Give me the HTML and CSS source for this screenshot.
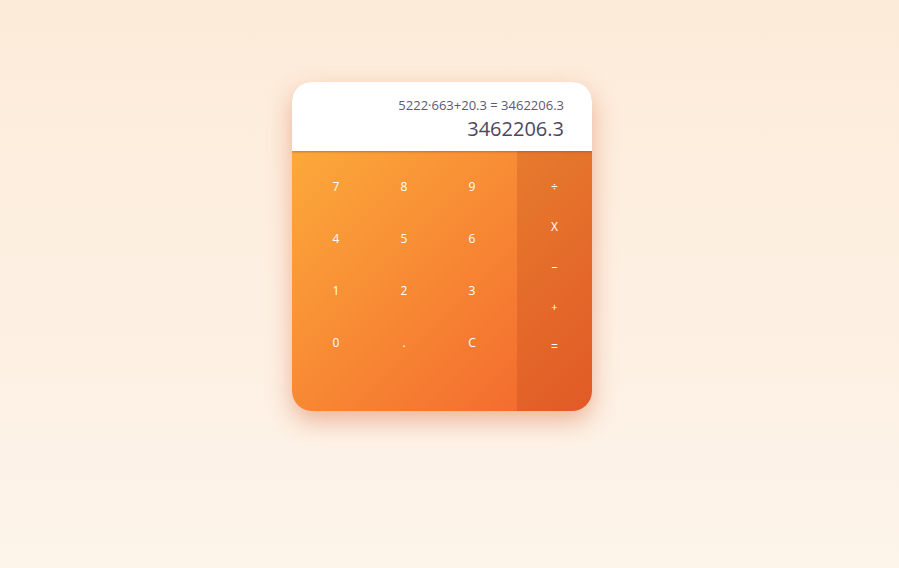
FILE: index.html
```html
<!DOCTYPE html>
<html>
<head>
<meta charset="utf-8">
<link rel="stylesheet" href="styles.css">
</head>
<body>
<div class="page">
  <div class="calc">
    <div class="display">
      <div class="expr">5222·663+20.3 = 3462206.3</div>
      <div class="result">3462206.3</div>
    </div>
    <div class="pad">
      <div class="digits">
        <div class="key">7</div><div class="key">8</div><div class="key">9</div>
        <div class="key">4</div><div class="key">5</div><div class="key">6</div>
        <div class="key">1</div><div class="key">2</div><div class="key">3</div>
        <div class="key">0</div><div class="key">.</div><div class="key">C</div>
      </div>
      <div class="ops">
        <div class="op">÷</div>
        <div class="op">X</div>
        <div class="op">–</div>
        <div class="op small">+</div>
        <div class="op">=</div>
      </div>
    </div>
  </div>
</div>
</body>
</html>
```
FILE: styles.css
```css
html, body {
  margin: 0;
  padding: 0;
  height: 100%;
}
body {
  background: linear-gradient(180deg, #fdebd9 0%, #fdf4ea 100%);
  font-family: "Open Sans", "Noto Sans", sans-serif;
}
.page {
  height: 100%;
  display: flex;
  justify-content: center;
  padding: 82px 15px 0 0;
  box-sizing: border-box;
}
.calc {
  width: 300px;
  height: 329px;
  border-radius: 20px;
  overflow: hidden;
  display: flex;
  flex-direction: column;
  box-shadow: 0 10px 24px rgba(215, 95, 50, 0.42);
}
.display {
  height: 69px;
  background: #fff;
  padding: 14px 28px 0 0;
  box-sizing: border-box;
  text-align: right;
  color: #4b4760;
  position: relative;
  z-index: 1;
  box-shadow: 0 1px 2px rgba(150, 70, 30, 0.5);
}
.expr {
  font-size: 13px;
  line-height: 18px;
  color: #5c5873;
}
.result {
  font-size: 20px;
  line-height: 30px;
}
.pad {
  flex: 1;
  display: flex;
  background: linear-gradient(135deg, #fca93a 0%, #f2632d 100%);
}
.digits {
  width: 225px;
  box-sizing: border-box;
  padding: 9px 11px 0 10px;
  display: grid;
  grid-template-columns: repeat(3, 68px);
  grid-auto-rows: 52px;
  align-content: start;
}
.key, .op {
  display: flex;
  align-items: center;
  justify-content: center;
  color: #fff;
  font-size: 12px;
}
.ops {
  flex: 1;
  background: rgba(170, 60, 20, 0.22);
  padding-top: 15px;
  display: grid;
  grid-auto-rows: 40px;
  align-content: start;
}
.op.small {
  font-size: 11px;
}
```
